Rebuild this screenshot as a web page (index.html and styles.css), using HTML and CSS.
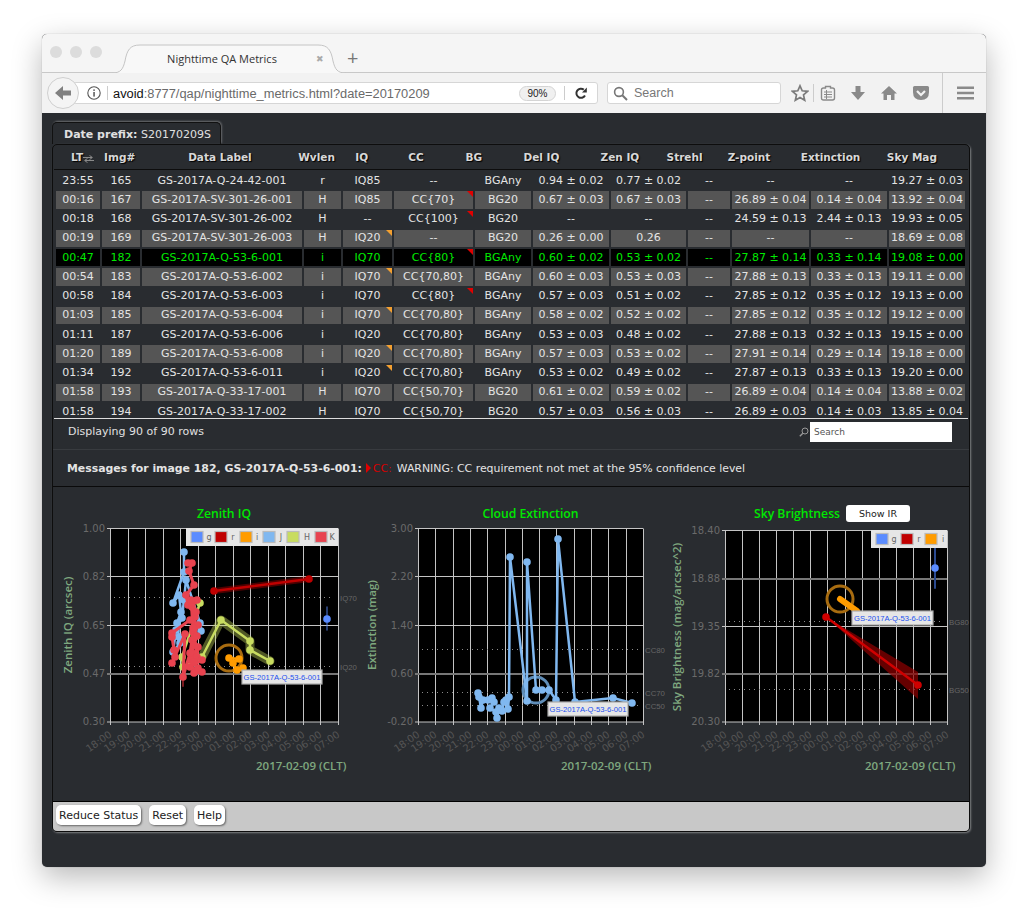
FILE: index.html
```html
<!DOCTYPE html>
<html>
<head>
    <title>Nighttime QA Metrics</title>
    <link rel="stylesheet" href="styles.css">
</head>
<body>
<div class="window">
    <div class="tabbar">
        <div class="lights"><span></span><span></span><span></span></div>
        <div class="tab">
            <svg class="tab-shape" viewBox="0 0 234 29" preserveAspectRatio="none"><path d="M0 29C9 29 11 25 13 17C15 6 18 1 28 1H206C216 1 219 6 221 17C223 25 225 29 234 29" fill="#f8f8f8" stroke="#c4c4c4"/></svg>
            <span class="tab-title">Nighttime QA Metrics</span>
            <span class="tab-close">&#10006;</span>
        </div>
        <span class="tab-new">+</span>
    </div>

    <div class="navbar">
        <div class="back"><svg width="20" height="20" viewBox="0 0 20 20"><path d="M2 10L10 3V7.5H18V12.5H10V17Z" fill="#808080"/></svg></div>
        <div class="urlbar">
            <svg class="info" width="14" height="14" viewBox="0 0 14 14"><circle cx="7" cy="7" r="6.2" fill="none" stroke="#555" stroke-width="1.1"/><rect x="6.3" y="6" width="1.5" height="4.6" fill="#555"/><rect x="6.3" y="3.4" width="1.5" height="1.5" fill="#555"/></svg>
            <span class="url"><b>avoid</b>:8777/qap/nighttime_metrics.html?date=20170209</span>
            <span class="zoom-badge">90%</span>
            <svg class="reload" width="14" height="14" viewBox="0 0 14 14"><path d="M11 9.5A4.6 4.6 0 1 1 9.8 3.6" fill="none" stroke="#333" stroke-width="2"/><path d="M8 6.4L12.8 6.4L12.8 1.6Z" fill="#333"/></svg>
        </div>
        <div class="searchbar">
            <svg width="15" height="15" viewBox="0 0 15 15"><circle cx="6" cy="6" r="4.4" fill="none" stroke="#777" stroke-width="1.6"/><path d="M9.3 9.3L14 14" stroke="#777" stroke-width="2"/></svg>
            <span>Search</span>
        </div>
        <div class="toolbar-icons">
            <svg width="18" height="18" viewBox="0 0 18 18"><path d="M9 1.8L11.2 6.8L16.6 7.3L12.5 10.9L13.7 16.2L9 13.4L4.3 16.2L5.5 10.9L1.4 7.3L6.8 6.8Z" fill="none" stroke="#7c7c7c" stroke-width="1.7"/></svg>
            <i class="sep"></i>
            <svg width="16" height="16" viewBox="0 0 16 16"><path d="M3.5 3H5.5V1.5H10.5V3H12.5Q14.5 3 14.5 5V13Q14.5 15 12.5 15H3.5Q1.5 15 1.5 13V5Q1.5 3 3.5 3Z" fill="none" stroke="#8a8a8a" stroke-width="1.4"/><path d="M4 7H12M4 9.5H12M4 12H12M6.5 5V14" stroke="#8a8a8a"/></svg>
            <svg class="gap1" width="16" height="16" viewBox="0 0 16 16"><path d="M5.5 1H10.5V7H15L8 15L1 7H5.5Z" fill="#8a8a8a"/></svg>
            <svg class="gap2" width="18" height="16" viewBox="0 0 18 16"><path d="M9 1L17 8.5H14.5V15H11V10H7V15H3.5V8.5H1Z" fill="#8a8a8a"/></svg>
            <svg class="gap2" width="18" height="16" viewBox="0 0 18 16"><path d="M2.5 1H15.5Q17 1 17 2.5V7Q17 15 9 15Q1 15 1 7V2.5Q1 1 2.5 1Z" fill="#8a8a8a"/><path d="M5 6L9 10L13 6" fill="none" stroke="#f2f2f2" stroke-width="2.2"/></svg>
            <i class="sep sep-tall"></i>
            <svg width="17" height="14" viewBox="0 0 17 14"><path d="M0 0.5H17V3H0ZM0 5.7H17V8.2H0ZM0 11H17V13.5H0Z" fill="#8a8a8a"/></svg>
        </div>
    </div>

    <div class="content">
        <div class="date-tab"><b>Date prefix:</b> S20170209S</div>
        <div class="panel">
            <table class="head-table">
                <colgroup>
                    <col class="h1"><col class="h2"><col class="h3"><col class="h4"><col class="h5"><col class="h6"><col class="h7">
                    <col class="h8"><col class="h9"><col class="h10"><col class="h11"><col class="h12"><col class="h13">
                </colgroup>
                <tr>
                    <th>LT<svg class="sort" width="11" height="8" viewBox="0 0 11 8"><path d="M0 2.5H9M6.5 0.4L9.4 2.5L6.5 4.6M11 5.5H2M4.5 3.4L1.6 5.5L4.5 7.6" fill="none" stroke="#8a8a8a"/></svg></th>
                    <th>Img#</th><th>Data Label</th><th>Wvlen</th><th>IQ</th><th>CC</th><th>BG</th>
                    <th>Del IQ</th><th>Zen IQ</th><th>Strehl</th><th>Z-point</th><th>Extinction</th><th>Sky Mag</th>
                </tr>
            </table>
            <div class="table-scroll">
                <table class="data-table">
                    <colgroup>
                        <col class="d1"><col class="d2"><col class="d3"><col class="d4"><col class="d5"><col class="d6"><col class="d7">
                        <col class="d8"><col class="d9"><col class="d10"><col class="d11"><col class="d12"><col class="d13">
                    </colgroup>
                    <tr><td>23:55</td><td>165</td><td>GS-2017A-Q-24-42-001</td><td>r</td><td>IQ85</td><td>--</td><td>BGAny</td><td>0.94 ± 0.02</td><td>0.77 ± 0.02</td><td>--</td><td>--</td><td>--</td><td>19.27 ± 0.03</td></tr>
                    <tr class="alt"><td>00:16</td><td>167</td><td>GS-2017A-SV-301-26-001</td><td>H</td><td>IQ85</td><td class="flag-red">CC{70}</td><td>BG20</td><td>0.67 ± 0.03</td><td>0.67 ± 0.03</td><td>--</td><td>26.89 ± 0.04</td><td>0.14 ± 0.04</td><td>13.92 ± 0.04</td></tr>
                    <tr><td>00:18</td><td>168</td><td>GS-2017A-SV-301-26-002</td><td>H</td><td>--</td><td class="flag-red">CC{100}</td><td>BG20</td><td>--</td><td>--</td><td>--</td><td>24.59 ± 0.13</td><td>2.44 ± 0.13</td><td>19.93 ± 0.05</td></tr>
                    <tr class="alt"><td>00:19</td><td>169</td><td>GS-2017A-SV-301-26-003</td><td>H</td><td class="flag-orange">IQ20</td><td>--</td><td>BG20</td><td>0.26 ± 0.00</td><td>0.26</td><td>--</td><td>--</td><td>--</td><td>18.69 ± 0.08</td></tr>
                    <tr class="selected"><td>00:47</td><td>182</td><td>GS-2017A-Q-53-6-001</td><td>i</td><td>IQ70</td><td class="flag-red">CC{80}</td><td>BGAny</td><td>0.60 ± 0.02</td><td>0.53 ± 0.02</td><td>--</td><td>27.87 ± 0.14</td><td>0.33 ± 0.14</td><td>19.08 ± 0.00</td></tr>
                    <tr class="alt"><td>00:54</td><td>183</td><td>GS-2017A-Q-53-6-002</td><td>i</td><td class="flag-orange">IQ70</td><td>CC{70,80}</td><td>BGAny</td><td>0.60 ± 0.03</td><td>0.53 ± 0.03</td><td>--</td><td>27.88 ± 0.13</td><td>0.33 ± 0.13</td><td>19.11 ± 0.00</td></tr>
                    <tr><td>00:58</td><td>184</td><td>GS-2017A-Q-53-6-003</td><td>i</td><td>IQ70</td><td class="flag-red">CC{80}</td><td>BGAny</td><td>0.57 ± 0.03</td><td>0.51 ± 0.02</td><td>--</td><td>27.85 ± 0.12</td><td>0.35 ± 0.12</td><td>19.13 ± 0.00</td></tr>
                    <tr class="alt"><td>01:03</td><td>185</td><td>GS-2017A-Q-53-6-004</td><td>i</td><td class="flag-orange">IQ70</td><td>CC{70,80}</td><td>BGAny</td><td>0.58 ± 0.02</td><td>0.52 ± 0.02</td><td>--</td><td>27.85 ± 0.12</td><td>0.35 ± 0.12</td><td>19.12 ± 0.00</td></tr>
                    <tr><td>01:11</td><td>187</td><td>GS-2017A-Q-53-6-006</td><td>i</td><td>IQ20</td><td>CC{70,80}</td><td>BGAny</td><td>0.53 ± 0.03</td><td>0.48 ± 0.02</td><td>--</td><td>27.88 ± 0.13</td><td>0.32 ± 0.13</td><td>19.15 ± 0.00</td></tr>
                    <tr class="alt"><td>01:20</td><td>189</td><td>GS-2017A-Q-53-6-008</td><td>i</td><td class="flag-orange">IQ20</td><td>CC{70,80}</td><td>BGAny</td><td>0.57 ± 0.03</td><td>0.53 ± 0.02</td><td>--</td><td>27.91 ± 0.14</td><td>0.29 ± 0.14</td><td>19.18 ± 0.00</td></tr>
                    <tr><td>01:34</td><td>192</td><td>GS-2017A-Q-53-6-011</td><td>i</td><td class="flag-orange">IQ20</td><td>CC{70,80}</td><td>BGAny</td><td>0.53 ± 0.02</td><td>0.49 ± 0.02</td><td>--</td><td>27.87 ± 0.13</td><td>0.33 ± 0.13</td><td>19.20 ± 0.00</td></tr>
                    <tr class="alt"><td>01:58</td><td>193</td><td>GS-2017A-Q-33-17-001</td><td>H</td><td>IQ70</td><td>CC{50,70}</td><td>BG20</td><td>0.61 ± 0.02</td><td>0.59 ± 0.02</td><td>--</td><td>26.89 ± 0.04</td><td>0.14 ± 0.04</td><td>13.88 ± 0.02</td></tr>
                    <tr><td>01:58</td><td>194</td><td>GS-2017A-Q-33-17-002</td><td>H</td><td>IQ70</td><td>CC{50,70}</td><td>BG20</td><td>0.57 ± 0.03</td><td>0.56 ± 0.03</td><td>--</td><td>26.89 ± 0.03</td><td>0.14 ± 0.03</td><td>13.85 ± 0.04</td></tr>
                </table>
            </div>

            <div class="table-foot">
                <span>Displaying 90 of 90 rows</span>
                <div class="filter">
                    <svg width="10" height="10" viewBox="0 0 10 10"><circle cx="6" cy="4" r="3" fill="none" stroke="#999"/><path d="M3.8 6.2L0.8 9.2" stroke="#999" stroke-width="1.4"/></svg>
                    <span class="filter-input">Search</span>
                </div>
            </div>

            <div class="messages">
                <b>Messages for image 182, GS-2017A-Q-53-6-001:</b>
                <span class="warn-arrow"></span><span class="warn">CC:</span>
                <span>WARNING: CC requirement not met at the 95% confidence level</span>
            </div>

            <div class="plots">
                <div class="plot plot-iq">
                    <div class="plot-title">Zenith IQ</div>
                    <div id="chart-iq"></div>
                </div>
                <div class="plot plot-cc">
                    <div class="plot-title">Cloud Extinction</div>
                    <div id="chart-cc"></div>
                </div>
                <div class="plot plot-bg">
                    <div class="plot-title">Sky Brightness <span class="show-ir">Show IR</span></div>
                    <div id="chart-bg"></div>
                </div>
            </div>

            <div class="buttons">
                <span class="btn">Reduce Status</span>
                <span class="btn">Reset</span>
                <span class="btn">Help</span>
            </div>
        </div>
    </div>
</div>
<script src="charts.js"></script>
</body>
</html>
```

FILE: styles.css
```css
body {
    margin: 0;
    padding: 34px 0 0 42px;
    height: 918px;
    box-sizing: border-box;
    overflow: hidden;
    background: #fff;
    font-family: "DejaVu Sans", sans-serif;
    font-size: 11px;
}
.window {
    width: 944px;
    height: 833px;
    border-radius: 5px;
    overflow: hidden;
    box-shadow: 0 10px 30px rgba(0,0,0,0.28), 0 0 1px rgba(0,0,0,0.4);
    display: flex;
    flex-direction: column;
    background: #292c30;
}

/* browser chrome */
.tabbar {
    height: 39px;
    flex: none;
    box-sizing: border-box;
    background: #f5f5f5;
    border-bottom: 1px solid #c8c8c8;
    display: flex;
    align-items: flex-end;
    font-family: "Open Sans", sans-serif;
}
.lights {
    display: flex;
    gap: 8px;
    width: 70px;
    padding: 0 0 14px 8px;
    box-sizing: border-box;
}
.lights span {
    width: 12px;
    height: 12px;
    border-radius: 50%;
    background: #dcdcdc;
}
.tab {
    position: relative;
    width: 234px;
    height: 29px;
    margin-bottom: -1px;
    display: flex;
    align-items: center;
    justify-content: center;
    color: #333;
    font-size: 11px;
}
.tab-shape {
    position: absolute;
    inset: 0;
    width: 100%;
    height: 100%;
}
.tab-title {
    z-index: 1;
    padding-right: 14px;
}
.tab-close {
    position: absolute;
    right: 22px;
    top: 8px;
    font-size: 9px;
    color: #aaa;
}
.tab-new {
    margin: 0 0 2px 1px;
    font-size: 20px;
    line-height: 24px;
    color: #777;
}
.navbar {
    height: 40px;
    flex: none;
    box-sizing: border-box;
    background: #f2f2f2;
    display: flex;
    align-items: center;
    padding-left: 5px;
    font-family: "Liberation Sans", sans-serif;
}
.back {
    position: relative;
    z-index: 1;
    width: 32px;
    height: 32px;
    box-sizing: border-box;
    border: 1px solid #cfcfcf;
    border-radius: 50%;
    background: #f4f4f4;
    display: flex;
    align-items: center;
    justify-content: center;
}
.urlbar, .searchbar {
    height: 22px;
    box-sizing: border-box;
    background: #fff;
    border: 1px solid #d6d6d6;
    border-radius: 3px;
    display: flex;
    align-items: center;
}
.urlbar {
    width: 525px;
    margin-left: -6px;
    padding-left: 13px;
}
.info {
    padding-right: 6px;
    border-right: 1px solid #ccc;
}
.url {
    margin-left: 5px;
    width: 406px;
    font-size: 12.85px;
    color: #6a6a6a;
    white-space: nowrap;
}
.url b {
    font-weight: normal;
    color: #111;
}
.zoom-badge {
    width: 37px;
    height: 15px;
    box-sizing: border-box;
    border: 1px solid #d4d4d4;
    border-radius: 8px;
    background: #f0f0f0;
    text-align: center;
    line-height: 13px;
    font-size: 10px;
    color: #222;
}
.reload {
    margin-left: 8px;
    padding-left: 9px;
    border-left: 1px solid #ccc;
}
.searchbar {
    width: 174px;
    margin-left: 9px;
    padding-left: 5px;
    gap: 6px;
    font-size: 12.5px;
    color: #777;
}
.toolbar-icons {
    display: flex;
    align-items: center;
    margin-left: 10px;
}
.sep {
    width: 1px;
    height: 18px;
    background: #ccc;
    margin: 0 6px 0 4px;
}
.sep-tall {
    height: 40px;
    margin: 0 14px 0 12px;
}
.gap1 { margin-left: 14px; }
.gap2 { margin-left: 14px; }

/* page */
.content {
    flex: 1;
    padding: 9px 16px 0 10px;
}
.date-tab {
    width: 169px;
    height: 22px;
    box-sizing: border-box;
    padding-left: 11px;
    line-height: 24px;
    color: #e0e0e0;
    font-size: 11px;
    border: 1px solid #111;
    border-bottom: none;
    border-radius: 5px 5px 0 0;
    box-shadow: 1px -1px 2px rgba(255,255,255,0.3);
}
.panel {
    height: 688px;
    box-sizing: border-box;
    border: 1px solid #0d0d0d;
    border-radius: 5px;
    box-shadow: 1px 1px 2px rgba(255,255,255,0.4);
    display: flex;
    flex-direction: column;
    overflow: hidden;
}
.head-table {
    table-layout: fixed;
    border-collapse: collapse;
    margin-left: 18px;
    width: 896px;
    height: 24px;
    flex: none;
}
.head-table th {
    padding: 0;
    text-align: left;
    font-size: 10.5px;
    color: #d8d8d8;
    text-shadow: 1px 1px 1px #000;
    white-space: nowrap;
}
.sort { vertical-align: -2px; }
.h1 { width: 33px; } .h2 { width: 84px; } .h3 { width: 110px; } .h4 { width: 57px; }
.h5 { width: 53px; } .h6 { width: 57px; } .h7 { width: 58px; } .h8 { width: 77px; }
.h9 { width: 66px; } .h10 { width: 61px; } .h11 { width: 73px; } .h12 { width: 86px; } .h13 { width: 80px; }

.table-scroll {
    height: 248px;
    flex: none;
    overflow: hidden;
    border-top: 1px solid #0d0d0d;
    border-bottom: 1px solid #ddd;
    margin: 0 1px;
}
.data-table {
    table-layout: fixed;
    border-collapse: separate;
    border-spacing: 2px;
    width: 913px;
    color: #e4e4e4;
}
.data-table tr { height: 17.25px; }
.data-table td {
    position: relative;
    padding: 0;
    text-align: center;
    white-space: nowrap;
    line-height: 14px;
}
.d1 { width: 44px; } .d2 { width: 38px; } .d3 { width: 160px; } .d4 { width: 37px; }
.d5 { width: 49px; } .d6 { width: 79px; } .d7 { width: 56px; } .d8 { width: 76px; }
.d9 { width: 75px; } .d10 { width: 42px; } .d11 { width: 77px; } .d12 { width: 76px; } .d13 { width: 76px; }

.alt td { background: #555; }
.selected td {
    background: #000;
    color: #00ea00;
    font-weight: 500;
}
.flag-red::after, .flag-orange::after {
    content: "";
    position: absolute;
    top: 0;
    right: 0;
    border-top: 6px solid #e00000;
    border-left: 6px solid transparent;
}
.flag-orange::after { border-top-color: #f4a030; }

.table-foot {
    height: 30px;
    flex: none;
    display: flex;
    justify-content: space-between;
    align-items: flex-start;
    padding: 3px 17px 0 15px;
    color: #e0e0e0;
    box-sizing: border-box;
}
.table-foot > span { margin-top: 3px; }
.filter {
    display: flex;
    align-items: center;
    gap: 1px;
}
.filter-input {
    width: 142px;
    height: 20px;
    box-sizing: border-box;
    background: #fff;
    color: #555;
    font-size: 9px;
    line-height: 20px;
    padding-left: 4px;
}
.messages {
    height: 38px;
    flex: none;
    box-sizing: border-box;
    border-top: 1px solid #383b3f;
    border-bottom: 1px solid #0a0a0a;
    padding: 0 14px;
    display: flex;
    align-items: center;
    color: #e4e4e4;
    font-size: 10.9px;
    white-space: nowrap;
}
.messages b { margin-right: 4px; }
.warn-arrow {
    border-left: 5px solid #e00000;
    border-top: 5px solid transparent;
    border-bottom: 5px solid transparent;
    margin-right: 2px;
}
.warn { color: #d40000; margin-right: 5px; }

.plots {
    flex: 1;
    display: flex;
    padding: 17px 0 0 2px;
}
.plot svg {
    display: block;
    overflow: visible;
}
.plot-iq { width: 305px; }
.plot-cc { width: 300px; }
.plot-bg { width: 308px; }
.plot-title {
    height: 18px;
    display: flex;
    justify-content: center;
    align-items: center;
    gap: 6px;
    color: #00e800;
    font-family: "Open Sans", sans-serif;
    font-size: 12.2px;
    font-weight: 600;
}
.plot-iq .plot-title { margin: 0 22px 0 55px; }
.plot-cc .plot-title { margin: 0 17px 0 58px; }
.plot-bg .plot-title { margin: 0 25px 0 61px; }
.show-ir {
    width: 64px;
    height: 17px;
    background: #fff;
    border-radius: 3px;
    color: #222;
    font-family: "DejaVu Sans", sans-serif;
    font-size: 9.5px;
    font-weight: normal;
    line-height: 17px;
    text-align: center;
}
.buttons {
    height: 30px;
    flex: none;
    box-sizing: border-box;
    border-top: 1px solid #000;
    background: #c8c8c8;
    display: flex;
    gap: 8px;
    padding: 3px 0 0 3px;
}
.btn {
    height: 20px;
    box-sizing: border-box;
    padding: 0 3px;
    background: #fff;
    border-radius: 5px;
    box-shadow: 1px 1px 2px #666;
    color: #222;
    line-height: 22px;
}

/* chart text */
.tick { fill: #6a6a6a; font-size: 10px; }
.xtick { fill: #555; font-size: 10px; }
.zone { fill: #666; font-family: "Liberation Sans", sans-serif; font-size: 7.8px; }
.axis { fill: #7fa87f; font-family: "Open Sans", sans-serif; font-size: 11.5px; font-weight: 600; }
.legend { fill: #666; font-size: 8px; }
.tip { fill: #1a50f0; font-family: "Liberation Sans", sans-serif; font-size: 7.6px; text-anchor: middle; }
```

FILE: charts.js
```js
// Colours of the filter series
const G = '#5b8cff', R = '#c00000', I = '#ff9c00', J = '#80b8f0', H = '#c8dc60', K = '#e8434f';
const HOURS = ['18:00','19:00','20:00','21:00','22:00','23:00','00:00','01:00','02:00','03:00','04:00','05:00','06:00','07:00'];

const line = (pts, color, w, op) =>
    `<polyline points="${pts.join(' ')}" fill="none" stroke="${color}" stroke-width="${w}" stroke-linejoin="round" stroke-linecap="round" opacity="${op || 1}"/>`;
const dots = (pts, color, r) =>
    pts.map(p => `<circle cx="${p[0]}" cy="${p[1]}" r="${r || 3.8}" fill="${color}"/>`).join('');
const ring = (x, y, color) =>
    `<circle cx="${x}" cy="${y}" r="13" fill="none" stroke="${color}" stroke-width="3"/>`;
const series = (pts, color, w) => line(pts, color, w || 2.5) + dots(pts, color);

function legend(x0, x1, y, items) {
    let s = `<rect x="${x0}" y="${y}" width="${x1 - x0}" height="18" fill="#e6e6e6"/>`;
    items.forEach(([x, lx, color, name]) => {
        s += `<rect x="${x - 6}" y="${y + 3.5}" width="12" height="11" fill="${color}" stroke="#bbb" stroke-width="1.2"/>`;
        s += `<text class="legend" x="${lx}" y="${y + 12}" text-anchor="middle">${name}</text>`;
    });
    return s;
}

function tooltip(x, y, w) {
    return `<rect x="${x}" y="${y}" width="${w}" height="14" fill="#e6e6e6" stroke="#aaa" stroke-width="1.2"/>` +
        `<text class="tip" x="${x + w / 2}" y="${y + 10}">GS-2017A-Q-53-6-001</text>`;
}

function drawChart(id, c) {
    const bottom = c.ys[c.ys.length - 1][0], top = c.ys[0][0];
    let s = `<rect x="${c.x0}" y="${top}" width="${c.x1 - c.x0}" height="${bottom - top}" fill="#000"/>`;

    HOURS.forEach((h, i) => {
        const x = Math.round(c.x0 + i * (c.x1 - c.x0) / 13) + 0.5;
        s += `<line x1="${x}" x2="${x}" y1="${top}" y2="${bottom + 3}" stroke="#c4c4c4"/>`;
        s += `<text class="xtick" x="${x + 2}" y="736" text-anchor="end" transform="rotate(-35 ${x + 2} 736)">${h}</text>`;
    });
    c.ys.forEach(([y, label, thick]) => {
        s += `<line x1="${c.x0 - 3}" x2="${c.x1}" y1="${y}" y2="${y}" stroke="${thick ? '#777' : '#c4c4c4'}" stroke-width="${thick ? 2 : 1}"/>`;
        s += `<text class="tick" x="${c.x0 - 5}" y="${y + 3}" text-anchor="end">${label}</text>`;
    });
    c.zones.forEach(([y, label]) => {
        s += `<line x1="${c.x0 + 4}" x2="${c.x1 - 4}" y1="${y}" y2="${y}" stroke="#8a8a8a" stroke-dasharray="1 4"/>`;
        s += `<text class="zone" x="${c.x1 + 2}" y="${y + 3}">${label}</text>`;
    });
    s += c.data;
    s += `<text class="axis" text-anchor="middle" transform="translate(${c.ylabel[0]} ${c.ylabel[1]}) rotate(-90)">${c.ylabel[2]}</text>`;
    s += `<text class="axis" x="${c.xlabel}" y="770">2017-02-09 (CLT)</text>`;

    document.getElementById(id).innerHTML =
        `<svg width="${c.view[1]}" height="270" viewBox="${c.view[0]} 522 ${c.view[1]} 270">${s}</svg>`;
}

const kPts = [[188,563],[192,563],[189,571],[194,585],[186,595],[188,605],[197,600],[192,607],[195,617],[190,620],
    [172,633],[172,637],[174,650],[175,657],[172,663],[185,634],[183,677],[190,653],[193,632],[198,625],
    [192,640],[196,612],[191,600],[193,628],[197,636],[194,645],[191,660],[198,647],[197,657],[202,660],
    [190,667],[202,672],[194,673],[198,668],[194,662]];
const jPts = [[184,552],[184,572],[173,603],[179,595],[181,612],[177,623],[179,637],[180,643],[173,652],
    [176,630],[182,618],[184,600],[186,580],[200,623],[201,631]];

drawChart('chart-iq', {
    view: [55, 305], x0: 110, x1: 338,
    ys: [[528.5,'1.00'],[576.5,'0.82'],[625.5,'0.65'],[674,'0.47',1],[722,'0.30']],
    zones: [[597.5,'IQ70'],[666.5,'IQ20']],
    ylabel: [72, 625, 'Zenith IQ (arcsec)'], xlabel: 256,
    data:
        line([[214,591],[309,579]], R, 6, 0.4) + series([[214,591],[309,579]], R) +
        line([[202,657],[221,620],[250,641],[250,650],[270,661]], H, 9, 0.4) +
        series(jPts, J) +
        series([[200,603],[182,657],[183,667],[202,657],[221,620],[250,641],[250,650],[270,661]], H) +
        line([[183,677],[183,686]], '#7a1a20', 2) +
        series(kPts, K, 3) +
        ring(229, 658, '#a86c10') +
        line([[229,658],[239,659],[233,663],[237,670],[243,668]], I, 2.5) +
        dots([[229,658],[239,659],[233,663],[237,670],[243,668]], I) +
        line([[327,607],[327,630]], G, 1.5, 0.6) + dots([[327,619]], G) +
        legend(186, 338, 528, [[197,209,G,'g'],[221,233,R,'r'],[246,257,I,'i'],[269,281,J,'J'],[293,307,H,'H'],[321,332,K,'K']]) +
        tooltip(242, 670, 80)
});

const ccPts = [[478,693],[479,697],[481,708],[483,700],[488,700],[492,698],[494,702],[490,708],[496,712],[497,718],
    [499,708],[502,711],[504,702],[506,700],[508,709],[509,697],[510,557],[527,701],[527,562],[536,690],
    [542,690],[549,690],[556,700],[558,539],[575,702],[613,698],[632,703]];

drawChart('chart-cc', {
    view: [360, 300], x0: 418, x1: 643,
    ys: [[528.5,'3.00'],[576.5,'2.20'],[625.5,'1.40'],[674,'0.60',1],[722,'-0.20']],
    zones: [[649.5,'CC80'],[692.5,'CC70'],[705.5,'CC50']],
    ylabel: [376, 625, 'Extinction (mag)'], xlabel: 561,
    data:
        ring(536, 690, '#5f8db8') + series(ccPts, J) + tooltip(548, 702, 80)
});

drawChart('chart-bg', {
    view: [660, 308], x0: 725, x1: 947,
    ys: [[530.5,'18.40'],[579,'18.88',1],[626.5,'19.35'],[674,'19.82',1],[722,'20.30']],
    zones: [[621.5,'BG80'],[689.5,'BG50']],
    ylabel: [681, 627, 'Sky Brightness (mag/arcsec^2)'], xlabel: 865,
    data:
        '<polygon points="826,617 918,672 918,699" fill="#900000" opacity="0.7"/>' +
        series([[826,617],[918,685]], '#d00000') +
        ring(840, 599, '#a86c10') +
        line([[840,599],[857,611]], I, 6) +
        line([[935,547],[935,588]], '#2a4a90', 2) + dots([[935,568]], G) +
        legend(871, 947, 530, [[882,894,G,'g'],[907,919,R,'r'],[931,943,I,'i']]) +
        tooltip(852, 611, 81)
});
```
